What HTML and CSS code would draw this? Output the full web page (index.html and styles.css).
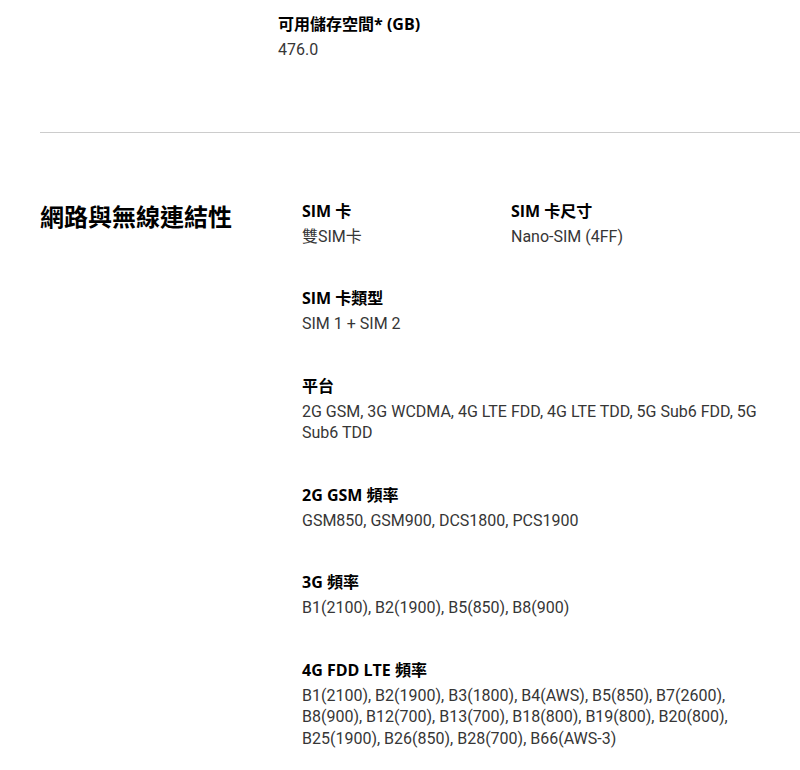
FILE: index.html
```html
<!DOCTYPE html>
<html lang="zh-Hant">
<head>
  <meta charset="UTF-8" />
  <meta name="viewport" content="width=device-width, initial-scale=1.0"/>
  <title>規格</title>
  <link rel="stylesheet" href="styles.css">
</head>
<body>
  <div class="specs">

    <!-- Storage (tail of previous section) -->
    <div class="spec-top">
      <div class="spec-item">
        <p class="spec-label">可用儲存空間* (GB)</p>
        <p class="spec-value">476.0</p>
      </div>
    </div>

    <!-- Network section -->
    <div class="spec-section">
      <h2 class="section-title">網路與無線連結性</h2>
      <div class="spec-list">
        <div class="spec-item">
          <p class="spec-label">SIM 卡</p>
          <p class="spec-value">雙SIM卡</p>
        </div>
        <div class="spec-item">
          <p class="spec-label">SIM 卡尺寸</p>
          <p class="spec-value">Nano-SIM (4FF)</p>
        </div>
        <div class="spec-item wide">
          <p class="spec-label">SIM 卡類型</p>
          <p class="spec-value">SIM 1 + SIM 2</p>
        </div>
        <div class="spec-item wide">
          <p class="spec-label">平台</p>
          <p class="spec-value">2G GSM, 3G WCDMA, 4G LTE FDD, 4G LTE TDD, 5G Sub6 FDD, 5G Sub6 TDD</p>
        </div>
        <div class="spec-item wide">
          <p class="spec-label">2G GSM 頻率</p>
          <p class="spec-value">GSM850, GSM900, DCS1800, PCS1900</p>
        </div>
        <div class="spec-item wide">
          <p class="spec-label">3G 頻率</p>
          <p class="spec-value">B1(2100), B2(1900), B5(850), B8(900)</p>
        </div>
        <div class="spec-item wide">
          <p class="spec-label">4G FDD LTE 頻率</p>
          <p class="spec-value">B1(2100), B2(1900), B3(1800), B4(AWS), B5(850), B7(2600), B8(900), B12(700), B13(700), B18(800), B19(800), B20(800), B25(1900), B26(850), B28(700), B66(AWS-3)</p>
        </div>
      </div>
    </div>

  </div>
</body>
</html>
```

FILE: styles.css
```css
body {
  font-family: 'Open Sans', 'Noto Sans CJK TC', sans-serif;
  background-color: #fff;
  color: #000;
  margin: 0;
}

p {
  margin: 0;
}

.specs {
  padding-left: 40px;
}

.spec-top {
  padding: 12px 0 32px 238px;
  border-bottom: 1px solid #ccc;
}

.spec-section {
  display: flex;
  padding-top: 66px;
}

.section-title {
  width: 262px;
  flex-shrink: 0;
  margin: 0;
  font-size: 24px;
  font-weight: 700;
  line-height: 36px;
}

.spec-list {
  display: grid;
  grid-template-columns: 209px 1fr;
  padding-right: 30px;
}

.spec-item {
  margin-bottom: 39px;
}

.spec-item.wide {
  grid-column: 1 / -1;
}

.spec-label {
  font-size: 16px;
  font-weight: 700;
  line-height: 24px;
  margin-bottom: 3px;
}

.spec-value {
  font-family: Roboto, 'Noto Sans CJK TC', sans-serif;
  font-size: 16px;
  line-height: 21.5px;
  color: #363636;
}
```
